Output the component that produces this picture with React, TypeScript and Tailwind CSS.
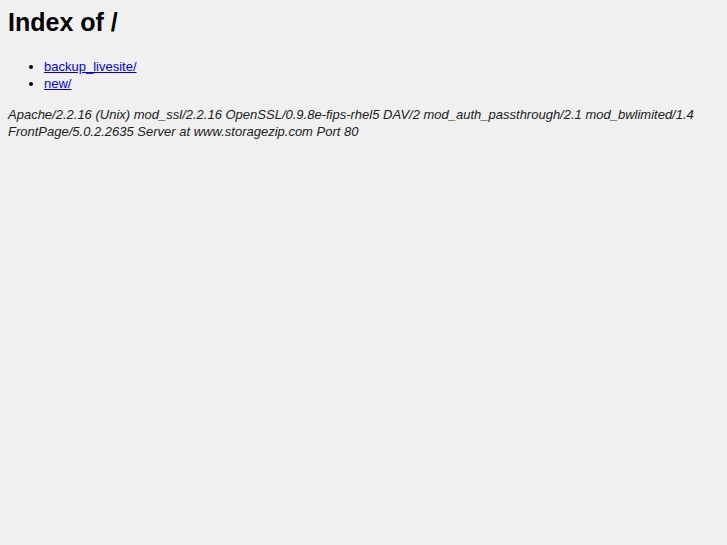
export default function App() {
  return (
    <div className="min-h-[545px] bg-[#f0f0f0] px-2 pt-[8px] text-[13px] leading-[17px] text-black" style={{ fontFamily: '"Liberation Sans", Arial, sans-serif' }}>
      <h1 className="text-[25px] font-bold leading-[29px]">Index of /</h1>
      <ul className="mt-[21px] list-disc pl-[36px]">
        <li><a href="#" className="text-[#0000ee] underline">backup_livesite/</a></li>
        <li><a href="#" className="text-[#0000ee] underline">new/</a></li>
      </ul>
      <address className="mt-[14px] italic text-[#202020]">
        Apache/2.2.16 (Unix) mod_ssl/2.2.16 OpenSSL/0.9.8e-fips-rhel5 DAV/2 mod_auth_passthrough/2.1 mod_bwlimited/1.4 FrontPage/5.0.2.2635 Server at www.storagezip.com Port 80
      </address>
    </div>
  );
}
